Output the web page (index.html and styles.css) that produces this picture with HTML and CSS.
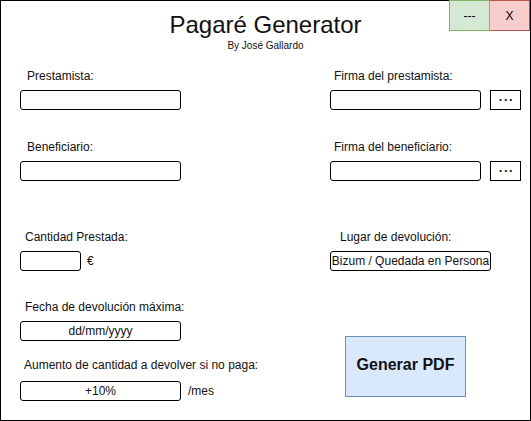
FILE: index.html
```html
<!DOCTYPE html>
<html lang="es">
<head>
<meta charset="utf-8">
<title>Pagaré Generator</title>
<link rel="stylesheet" href="styles.css">
</head>
<body>
<div class="frame">
  <div class="winbar">
    <div class="win win-min">---</div>
    <div class="win win-close">X</div>
  </div>
  <header class="head">
    <h1 class="title">Pagaré Generator</h1>
    <p class="byline">By José Gallardo</p>
  </header>
  <div class="form">
    <div class="row row-1">
      <div class="field">
        <div class="lbl pad-7">Prestamista:</div>
        <div class="box box-wide"></div>
      </div>
      <div class="field">
        <div class="lbl pad-4">Firma del prestamista:</div>
        <div class="inline">
          <div class="box box-sig"></div>
          <div class="more">...</div>
        </div>
      </div>
    </div>
    <div class="row row-2">
      <div class="field">
        <div class="lbl pad-7">Beneficiario:</div>
        <div class="box box-wide"></div>
      </div>
      <div class="field">
        <div class="lbl pad-4">Firma del beneficiario:</div>
        <div class="inline">
          <div class="box box-sig"></div>
          <div class="more">...</div>
        </div>
      </div>
    </div>
    <div class="row row-3">
      <div class="field">
        <div class="lbl pad-5">Cantidad Prestada:</div>
        <div class="inline">
          <div class="box box-small"></div>
          <span class="unit unit-eur">€</span>
        </div>
      </div>
      <div class="field">
        <div class="lbl pad-10">Lugar de devolución:</div>
        <div class="box box-wide">Bizum / Quedada en Persona</div>
      </div>
    </div>
    <div class="row row-4">
      <div class="col">
        <div class="field">
          <div class="lbl pad-5">Fecha de devolución máxima:</div>
          <div class="box box-wide">dd/mm/yyyy</div>
        </div>
        <div class="field field-last">
          <div class="lbl lbl-tall pad-4">Aumento de cantidad a devolver si no paga:</div>
          <div class="inline">
            <div class="box box-wide">+10%</div>
            <span class="unit unit-mes">/mes</span>
          </div>
        </div>
      </div>
      <div class="col">
        <div class="generate">Generar PDF</div>
      </div>
    </div>
  </div>
</div>
</body>
</html>
```

FILE: styles.css
```css
* { box-sizing: border-box; }

html, body {
  margin: 0;
  padding: 0;
  background: #fff;
}

body {
  font-family: "Liberation Sans", Arial, sans-serif;
  color: #000;
}

.frame {
  position: relative;
  width: 531px;
  height: 421px;
  border: 1px solid #000;
  background: #fff;
}

.winbar {
  position: absolute;
  top: -1px;
  right: 0;
  display: flex;
}

.win {
  height: 31px;
  display: flex;
  align-items: center;
  justify-content: center;
  font-size: 12px;
  color: #000;
}

.win-min {
  width: 41px;
  background: #d5e8d4;
  border: 1px solid #82b366;
}

.win-close {
  width: 40px;
  background: #f8cecc;
  border: 1px solid #b85450;
  border-left: none;
}

.head {
  padding-top: 10px;
  text-align: center;
}

.title {
  margin: 0;
  font-size: 24px;
  line-height: 28px;
  font-weight: normal;
  color: #111;
}

.byline {
  margin: 1px 0 0;
  font-size: 10px;
  line-height: 12px;
  color: #111;
}

.form {
  padding-left: 19px;
}

.row {
  display: grid;
  grid-template-columns: 310px 1fr;
}

.row-1 { margin-top: 17px; }
.row-2 { margin-top: 30px; }
.row-3 { margin-top: 49px; }
.row-4 { margin-top: 29px; }

.lbl {
  font-size: 12px;
  line-height: 14px;
  height: 14px;
  margin-bottom: 7px;
  white-space: nowrap;
  color: #111;
}

.lbl-tall { margin-bottom: 9px; }

.pad-4 { padding-left: 4px; }
.pad-5 { padding-left: 5px; }
.pad-7 { padding-left: 7px; }
.pad-10 { padding-left: 10px; }

.field-last { margin-top: 17px; }

.inline {
  display: flex;
  align-items: center;
}

.box {
  height: 20px;
  border: 1px solid #000;
  border-radius: 3px;
  background: #fff;
  font-size: 12px;
  line-height: 18px;
  text-align: center;
  white-space: nowrap;
  color: #111;
}

.box-wide { width: 161px; }
.box-sig { width: 151px; }
.box-small { width: 61px; }

.more {
  width: 31px;
  height: 20px;
  margin-left: 9px;
  border: 1px solid #000;
  font-size: 13px;
  font-weight: bold;
  line-height: 12px;
  letter-spacing: 1.5px;
  padding-left: 2px;
  display: flex;
  align-items: center;
  justify-content: center;
  padding-bottom: 6px;
  color: #222;
}

.unit {
  font-size: 12px;
  line-height: 14px;
  color: #111;
}

.unit-eur { margin-left: 6px; }
.unit-mes { margin-left: 7px; }

.generate {
  margin-top: 36px;
  margin-left: 15px;
  width: 121px;
  height: 61px;
  padding-bottom: 3px;
  background: #dae8fc;
  border: 1px solid #6c8ebf;
  display: flex;
  align-items: center;
  justify-content: center;
  font-size: 16px;
  font-weight: bold;
  color: #111;
}
```
